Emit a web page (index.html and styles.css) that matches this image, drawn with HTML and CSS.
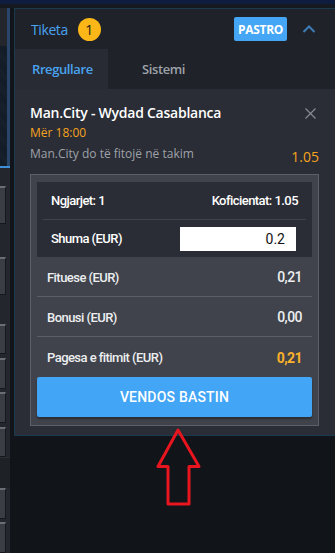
FILE: index.html
```html
<!DOCTYPE html>
<html>
<head>
<meta charset="utf-8">
<link rel="stylesheet" href="styles.css">
</head>
<body>
<div class="topband"></div>
<div class="page">
  <div class="leftstrip">
    <div class="ls-head"></div>
    <div class="ls-tex"></div>
    <div class="ls-line"></div>
    <div class="ls-gap s1"></div>
    <div class="ls-btn h40"></div>
    <div class="ls-gap s2"></div>
    <div class="ls-btn h40"></div>
    <div class="ls-gap s3"></div>
    <div class="ls-btn h32"></div>
    <div class="ls-gap s4"></div>
    <div class="ls-btn h32"></div>
    <div class="ls-gap s4"></div>
    <div class="ls-btn h32"></div>
    <div class="ls-gap s4"></div>
    <div class="ls-btn h32"></div>
    <div class="ls-sep"></div>
    <div class="ls-btn h32"></div>
    <div class="ls-gap s4"></div>
    <div class="ls-btn h32"></div>
  </div>
  <div class="panel">
    <div class="header">
      <span class="title">Tiketa</span>
      <span class="badge">1</span>
      <span class="spacer"></span>
      <button class="pastro">PASTRO</button>
      <svg class="chev" width="14" height="10" viewBox="0 0 14 10"><path d="M1.5 8 L7 2.5 L12.5 8" fill="none" stroke="#3e7cb8" stroke-width="2"/></svg>
    </div>
    <div class="tabs">
      <div class="tab active">Rregullare</div>
      <div class="tab">Sistemi</div>
    </div>
    <div class="body">
      <div class="event">
        <div class="event-top">
          <div>
            <div class="match">Man.City - Wydad Casablanca</div>
            <div class="time">Mër 18:00</div>
          </div>
          <svg class="close" width="11" height="11" viewBox="0 0 11 11"><path d="M0.5 0.5 L10.5 10.5 M10.5 0.5 L0.5 10.5" stroke="#8b8e95" stroke-width="1.1"/></svg>
        </div>
        <div class="pick">
          <span class="pick-name">Man.City do të fitojë në takim</span>
          <span class="odd">1.05</span>
        </div>
      </div>
      <div class="summary">
        <div class="dark">
          <div class="drow sepd">
            <span>Ngjarjet: 1</span>
            <span>Koficientat: 1.05</span>
          </div>
          <div class="drow">
            <span>Shuma (EUR)</span>
            <div class="input">0.2</div>
          </div>
        </div>
        <div class="lrow sepl">
          <span>Fituese (EUR)</span>
          <span class="val">0,21</span>
        </div>
        <div class="lrow sepl">
          <span>Bonusi (EUR)</span>
          <span class="val">0,00</span>
        </div>
        <div class="lrow">
          <span>Pagesa e fitimit (EUR)</span>
          <span class="val orange">0,21</span>
        </div>
        <button class="place">VENDOS BASTIN</button>
      </div>
    </div>
  </div>
</div>
<svg class="arrow" width="50" height="82" viewBox="0 0 50 82"><path d="M22 2 L2 38.5 L12 38.5 L12 76 L33 76 L33 38.5 L43 38.5 Z" fill="none" stroke="#e8151f" stroke-width="3" stroke-linejoin="round"/></svg>
</body>
</html>
```
FILE: styles.css
```css
* { box-sizing: border-box; }
html, body { margin: 0; padding: 0; }
body {
  width: 335px;
  height: 553px;
  overflow: hidden;
  background: #111418;
  font-family: "Roboto", "Liberation Sans", Arial, sans-serif;
  position: relative;
}
.topband {
  height: 4px;
  background: #0d1c3f;
  border-bottom: 4px solid #151a20;
  box-sizing: content-box;
}
.page {
  display: flex;
  gap: 4px;
  align-items: flex-start;
}
.leftstrip {
  width: 10px;
  height: 545px;
  background: #24272d;
  display: flex;
  flex-direction: column;
}
.ls-head { height: 40px; background: #23262c; border-right: 3px solid #29466a; }
.ls-tex {
  height: 126px;
  background: repeating-linear-gradient(45deg, #121a25 0 1px, #18212e 1px 2px);
  border-right: 3px solid #29466a;
}
.ls-line { height: 2px; background: #3e8fd8; }
.ls-gap { background: #23262c; }
.s1 { height: 19px; }
.s2 { height: 34px; }
.s3 { height: 30px; }
.s4 { height: 4px; }
.ls-btn {
  width: 6px;
  background: #3a3d44;
  border-top: 2px solid #6b6e74;
  border-right: 1px solid #16181c;
  border-bottom: 1px solid #16181c;
}
.h40 { height: 40px; }
.h32 { height: 32px; }
.ls-sep { height: 32px; background: #1e2126; border-top: 1px solid #2c2f35; }

.panel {
  flex: 1;
  border: 1px solid #1a3b4f;
  border-right: none;
  background: #2a2d35;
  height: 428px;
}
.header {
  height: 40px;
  background: #1f2229;
  display: flex;
  align-items: center;
  padding: 0 19px 0 16px;
}
.title {
  color: #4aa3f0;
  font-size: 14px;
  letter-spacing: -0.4px;
  font-family: "Open Sans", sans-serif;
}
.badge {
  width: 23px;
  height: 23px;
  border-radius: 50%;
  background: #fbb717;
  color: #1a1a1a;
  font-size: 14px;
  font-family: "Open Sans", sans-serif;
  display: flex;
  align-items: center;
  justify-content: center;
  margin-left: 10px;
}
.spacer { flex: 1; }
.pastro {
  background: #44a6f4;
  color: #fff;
  border: none;
  border-radius: 2px;
  width: 53px;
  height: 24px;
  font-family: "Open Sans", sans-serif;
  font-weight: 700;
  font-size: 12px;
  letter-spacing: -0.3px;
  padding: 0;
  margin-right: 15px;
}
.chev { display: block; }
.tabs {
  height: 40px;
  background: #1f2229;
  display: flex;
}
.tab {
  width: 93px;
  display: flex;
  align-items: center;
  padding-left: 17px;
  font-family: "Open Sans", sans-serif;
  font-size: 13px;
  font-weight: 600;
  letter-spacing: -0.4px;
  color: #9ea2a9;
}
.tab.active { background: #282b33; color: #4aa3f0; }
.tab + .tab { padding-left: 34px; }
.body {
  padding: 15px 16px 9px 15px;
}
.event-top {
  display: flex;
  justify-content: space-between;
  align-items: flex-start;
}
.match {
  color: #fff;
  font-family: "Open Sans", sans-serif;
  font-weight: 600;
  font-size: 14px;
  line-height: 18px;
  letter-spacing: -0.25px;
}
.time {
  color: #f5a31f;
  font-family: "Open Sans", sans-serif;
  font-size: 12px;
  line-height: 17px;
  margin-top: 2px;
}
.close { margin-top: 4px; margin-right: 3px; }
.pick {
  display: flex;
  justify-content: space-between;
  align-items: flex-start;
  margin-top: 4px;
  height: 29px;
}
.pick-name {
  color: #9ea2a9;
  font-family: "Open Sans", sans-serif;
  font-size: 12px;
  line-height: 18px;
}
.odd {
  color: #f5a31f;
  font-family: "Open Sans", sans-serif;
  font-size: 14px;
  line-height: 18px;
  margin-top: 3px;
}
.summary {
  border: 1px solid #5c5f67;
  background: #40434b;
  padding: 7px 6px 8px;
  font-family: "Roboto", sans-serif;
  font-weight: 500;
  font-size: 13px;
  letter-spacing: -0.55px;
  color: #fff;
}
.dark {
  background: #2a2d35;
  padding: 0 6px;
}
.drow {
  height: 37px;
  display: flex;
  align-items: center;
  justify-content: space-between;
  padding: 0 8px 0 8px;
}
.sepd { border-bottom: 1px solid #40434b; height: 38px; }
.input {
  width: 116px;
  height: 24px;
  background: #fff;
  color: #111;
  text-align: right;
  font-size: 14px;
  font-weight: 400;
  letter-spacing: 0;
  line-height: 24px;
  padding-right: 11px;
  margin-right: 2px;
}
.lrow {
  height: 40px;
  display: flex;
  align-items: center;
  justify-content: space-between;
  padding: 1px 10px 0;
  color: #eceef0;
}
.sepl { border-bottom: 1px solid #5a5d64; }
.val { font-size: 14px; }
.orange { color: #fbb12a; font-weight: 700; }
.place {
  display: block;
  width: 100%;
  height: 40px;
  background: #42a5f5;
  border: none;
  border-radius: 2px;
  box-shadow: 0 2px 2px rgba(0,0,0,0.35);
  color: #fff;
  font-family: "Roboto", sans-serif;
  font-weight: 500;
  font-size: 14px;
  letter-spacing: 0.2px;
}
.arrow {
  position: absolute;
  left: 156px;
  top: 428px;
}
```
